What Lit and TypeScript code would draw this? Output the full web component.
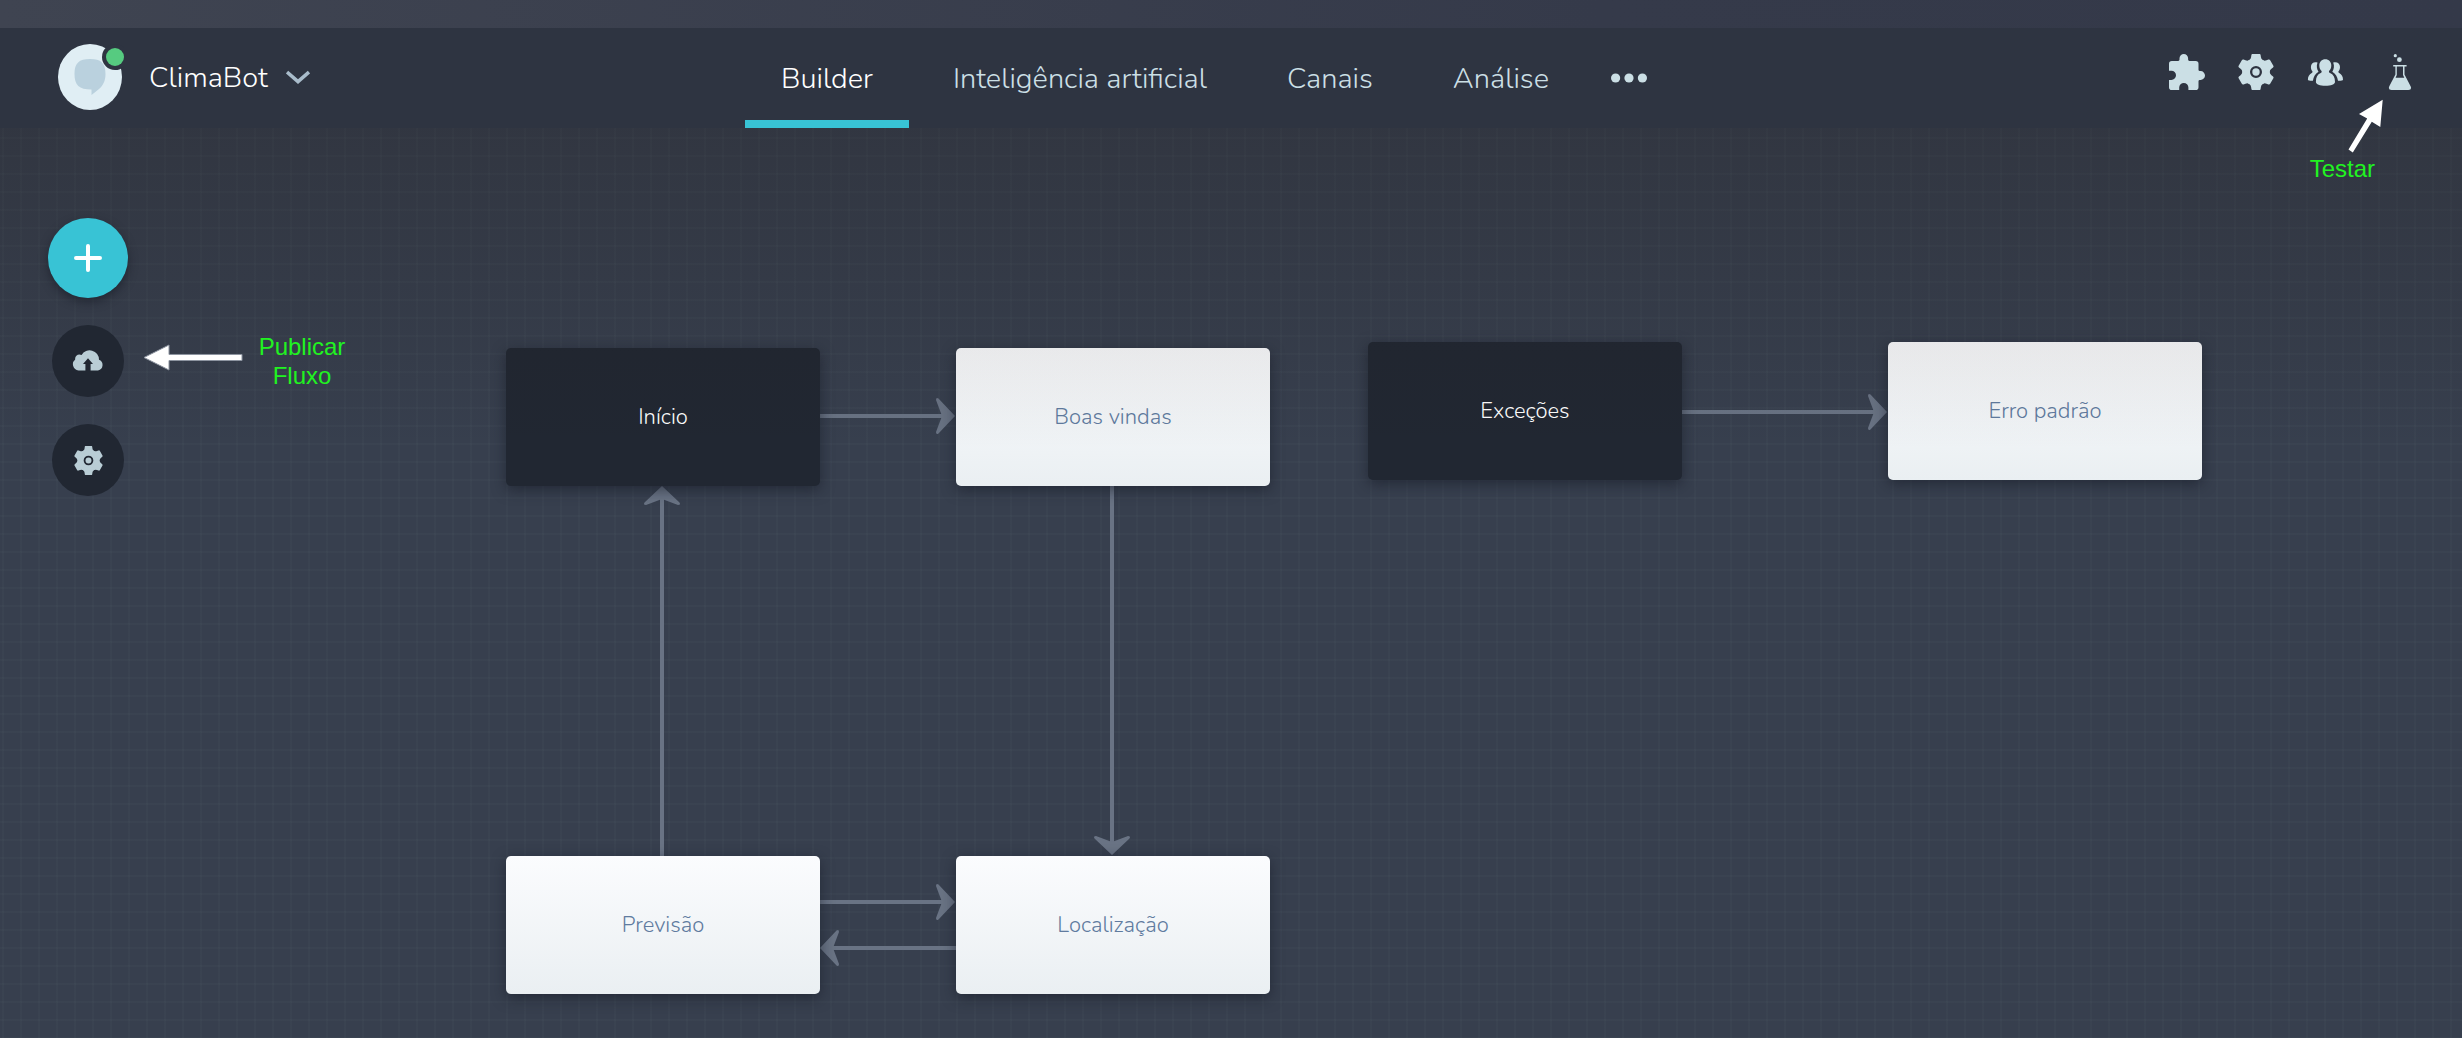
import { LitElement, html, svg, css } from "lit";
import { customElement, state } from "lit/decorators.js";
import { classMap } from "lit/directives/class-map.js";
import { styleMap } from "lit/directives/style-map.js";

interface FlowNode {
  label: string;
  x: number;
  y: number;
  dark?: boolean;
}

interface Link {
  x1: number;
  y1: number;
  x2: number;
  y2: number;
  angle: number;
}

const TABS = ["Builder", "Inteligência artificial", "Canais", "Análise"];

const NODES: FlowNode[] = [
  { label: "Início", x: 506, y: 220, dark: true },
  { label: "Boas vindas", x: 956, y: 220 },
  { label: "Exceções", x: 1368, y: 214, dark: true },
  { label: "Erro padrão", x: 1888, y: 214 },
  { label: "Previsão", x: 506, y: 728 },
  { label: "Localização", x: 956, y: 728 },
];

/* Each link runs from (x1, y1) to its arrow tip at (x2, y2). */
const LINKS: Link[] = [
  { x1: 820, y1: 288, x2: 955, y2: 288, angle: 0 },
  { x1: 1682, y1: 284, x2: 1887, y2: 284, angle: 0 },
  { x1: 1112, y1: 358, x2: 1112, y2: 727, angle: 90 },
  { x1: 662, y1: 728, x2: 662, y2: 358, angle: -90 },
  { x1: 820, y1: 774, x2: 955, y2: 774, angle: 0 },
  { x1: 956, y1: 820, x2: 820, y2: 820, angle: 180 },
];

const gear = (size: number) => html`
  <svg width=${size} height=${size} viewBox="-18 -18 36 36" aria-hidden="true" fill="currentColor">
    <path fill-rule="evenodd" d="M0-13.8A13.8 13.8 0 0 1 0 13.8A13.8 13.8 0 0 1 0-13.8ZM0-6A6 6 0 0 0 0 6A6 6 0 0 0 0-6Z" />
    ${[0, 60, 120, 180, 240, 300].map(
      (a) => svg`<path transform="rotate(${a})" d="M-6.6-12Q-5.2-13-4.9-15L-4.6-17Q-4.4-18.200-3.2-18.200H3.2Q4.4-18.200 4.6-17L4.9-15Q5.2-13 6.6-12L5-9H-5Z" />`
    )}
    <circle r="3.7" />
  </svg>
`;

const puzzle = html`
  <svg width="36" height="36" viewBox="0 0 36 36" aria-hidden="true" fill="currentColor">
    <path d="M2.8 7H9.2Q10.5 7 10.5 5.6V4.3A4.3 4.3 0 0 1 19.1 4.3V5.6Q19.1 7 20.4 7H26.7A2.8 2.8 0 0 1 29.5 9.8V15.8Q29.5 17.1 30.8 17.1H31.6A4.4 4.4 0 0 1 31.6 25.9H30.8Q29.5 25.9 29.5 27.2V33.2A2.8 2.8 0 0 1 26.7 36H19.4V33.6A4.6 4.6 0 0 0 10.2 33.6V36H2.8A2.8 2.8 0 0 1 0 33.2V25.9H2.4A4.6 4.6 0 0 0 2.4 16.7H0V9.8A2.8 2.8 0 0 1 2.8 7Z" />
  </svg>
`;

const people = html`
  <svg width="36" height="36" viewBox="0 0 36 36" aria-hidden="true" fill="currentColor">
    <path d="M18.3 5.3C21.8 5.3 24.3 8 24.3 11.4C24.3 13.9 23.4 15.8 22 17C21.8 18 22.2 18.6 23 19C26.4 20.3 28 23.4 28 28C28 30.4 24 31.7 18.4 31.7C12.8 31.7 8.9 30.4 8.9 28C8.9 23.4 10.4 20.3 13.7 19C14.5 18.6 14.8 18 14.6 17C13.2 15.8 12.3 13.9 12.3 11.4C12.3 8 14.8 5.3 18.3 5.3Z" />
    <path d="M26.2 8.6C29.8 7.4 33 9.4 33 13C33 14.9 32.4 16.2 31.5 17.2C31.3 18 31.5 18.5 32.2 18.9C34.7 20.2 36 22.4 36 25.7C36 26.5 33.4 27 31 26.8C30.4 22.9 28.7 19.6 25.3 17.7C26.9 15.5 27.6 12.2 26.2 8.6Z" />
    <path d="M10.5 8.6C6.9 7.4 3.9 9.4 3.9 13C3.9 14.9 4.5 16.2 5.4 17.2C5.6 18 5.4 18.5 4.7 18.9C2.2 20.2 0.9 22.4 0.9 25.7C0.9 26.5 3.5 27 5.9 26.8C6.5 22.9 8.2 19.6 11.5 17.7C9.9 15.5 9.2 12.2 10.5 8.6Z" />
  </svg>
`;

const flask = html`
  <svg width="24" height="36" viewBox="0 0 24 36" aria-hidden="true" fill="currentColor">
    <circle cx="7.3" cy="1.7" r="1.6" />
    <circle cx="11.4" cy="5.7" r="2.4" />
    <path fill-rule="evenodd" d="M5.2 11H18.6V12.6H16.5V20.5L22.6 32.2Q24.2 36 20.4 36H3.5Q-0.2 36 1.3 32.2L7.4 20.5V12.6H5.2ZM8.8 12.6V21L7.6 23.7H16.3L15 21V12.6Z" />
  </svg>
`;

const cloud = html`
  <svg width="32" height="22" viewBox="0 0 32 22" aria-hidden="true" fill="currentColor">
    <path d="M6.5 20.5A6.3 6.3 0 0 1 3.2 9.4C2.6 6 6.3 3.3 9.6 5.1A9.3 9.3 0 0 1 27 9.8A5.6 5.6 0 0 1 26 20.5H18.6V14H21L16 8.2L11 14H13.4V20.5Z" />
  </svg>
`;

@customElement("app-root")
export class AppRoot extends LitElement {
  static styles = css`
    :host {
      display: flex;
      flex-direction: column;
      min-height: 100vh;
      background: #373f4e;
      color: #fff;
      font-family: Nunito, "Open Sans", sans-serif;
      font-weight: 340;
      position: relative;
      overflow: hidden;
    }
    button {
      margin: 0;
      padding: 0;
      border: 0;
      background: none;
      color: inherit;
      font: inherit;
      cursor: pointer;
    }
    svg {
      display: block;
    }
    .strip {
      height: 28px;
      background: linear-gradient(90deg, #3f4451, #353a4a 65%, #343949);
    }
    .header {
      display: grid;
      grid-template-columns: 1fr auto 1fr;
      height: 100px;
      background: #2e3441;
    }
    .brand {
      display: flex;
      align-items: center;
      gap: 25px;
      padding: 0 0 2px 58px;
    }
    .bot {
      display: flex;
      align-items: center;
      gap: 18px;
      font-size: 29px;
    }
    .tabs {
      display: flex;
      gap: 8px;
    }
    .tab {
      display: flex;
      align-items: center;
      padding: 8px 36px 0;
      border-bottom: 8px solid transparent;
      color: #cbdfe5;
      font-size: 29px;
      text-decoration: none;
    }
    .tab.active {
      color: #fff;
      border-color: #38c3d5;
    }
    .more {
      width: 124px;
      padding-left: 18px;
      color: #cbdfe5;
    }
    .tools {
      display: flex;
      align-items: center;
      justify-content: flex-end;
      gap: 33px;
      padding: 0 38px 12px 0;
      color: #cbdfe5;
    }
    .tool-wide {
      display: flex;
      justify-content: center;
      width: 48px;
    }
    .canvas {
      flex: 1;
      position: relative;
      min-height: 910px;
      background:
        repeating-linear-gradient(90deg, transparent 0 2px, rgba(150, 180, 170, 0.03) 2px 4px, transparent 4px 18px),
        repeating-linear-gradient(180deg, transparent 0 9px, rgba(150, 180, 170, 0.03) 9px 11px, transparent 11px 18px);
    }
    .links {
      position: absolute;
      inset: 0;
      width: 100%;
      height: 100%;
      overflow: visible;
    }
    .node {
      position: absolute;
      width: 314px;
      height: 138px;
      border-radius: 5px;
      background: linear-gradient(#fbfcfe, #eaeff2);
      color: #607b9f;
      font-size: 22px;
      box-shadow: 0 4px 14px rgba(24, 28, 40, 0.6);
    }
    .node.dark {
      background: #212732;
      color: #fff;
    }
    .shade {
      position: absolute;
      inset: 0 0 auto;
      height: 320px;
      background: linear-gradient(rgba(32, 26, 24, 0.24), rgba(32, 26, 24, 0.09) 66%, transparent);
      pointer-events: none;
    }
    .actions {
      position: relative;
      display: inline-flex;
      flex-direction: column;
      align-items: center;
      gap: 27px;
      padding: 90px 0 0 48px;
    }
    .round {
      display: grid;
      place-items: center;
      width: 72px;
      height: 72px;
      border-radius: 50%;
      background: #212732;
      color: #b9cdd5;
    }
    .round.add {
      width: 80px;
      height: 80px;
      background: #38c3d5;
      color: #fff;
      box-shadow: 0 4px 10px rgba(20, 24, 34, 0.55);
    }
    .note {
      position: absolute;
      margin: 0;
      color: #21f321;
      font: 400 24px/29px "Liberation Sans", sans-serif;
      text-align: center;
    }
    .publish {
      left: 257px;
      top: 332px;
      width: 90px;
    }
    .test {
      right: 87px;
      top: 154px;
    }
    .pointer {
      position: absolute;
      pointer-events: none;
    }
    .publish-pointer {
      left: 140px;
      top: 342px;
    }
    .test-pointer {
      right: 72px;
      top: 96px;
    }
  `;

  @state() private active = TABS[0];

  private choose(e: Event, tab: string) {
    e.preventDefault();
    this.active = tab;
  }

  render() {
    return html`
      <div class="strip"></div>
      <header class="header">
        <div class="brand">
          <svg width="66" height="66" viewBox="0 0 66 66" role="img" aria-label="Bot online">
            <ellipse cx="32" cy="33" rx="32" ry="33" fill="#e0eef4" />
            <path fill="#bad1de" d="M32 15C43 15 47.5 19 47.5 30C47.5 37 45 41.5 41 45L33.5 51V45.5C21 45.5 16.5 41 16.5 30C16.5 19 21 15 32 15Z" />
            <circle cx="57" cy="13" r="13" fill="#2e3441" />
            <circle cx="57" cy="13" r="9" fill="#56cb80" />
          </svg>
          <button class="bot">
            ClimaBot
            <svg width="24" height="14" viewBox="0 0 24 14" aria-hidden="true">
              <path d="M1 2L12 11.5L23 2" fill="none" stroke="#a9bccb" stroke-width="3.6" />
            </svg>
          </button>
        </div>
        <nav class="tabs" aria-label="Principal">
          ${TABS.map(
            (t) => html`<a
              href="#"
              class=${classMap({ tab: true, active: t === this.active })}
              @click=${(e: Event) => this.choose(e, t)}
              >${t}</a
            >`
          )}
          <button class="more" aria-label="Mais">
            <svg width="36" height="10" viewBox="0 0 36 10" aria-hidden="true" fill="currentColor">
              <circle cx="4.6" cy="5" r="4.6" />
              <circle cx="18" cy="5" r="4.6" />
              <circle cx="31.4" cy="5" r="4.6" />
            </svg>
          </button>
        </nav>
        <div class="tools">
          <button aria-label="Extensões">${puzzle}</button>
          <button aria-label="Configurações">${gear(36)}</button>
          <button aria-label="Equipe">${people}</button>
          <button class="tool-wide" aria-label="Testar">${flask}</button>
        </div>
      </header>

      <main class="canvas">
        <svg class="links" aria-hidden="true">
          ${LINKS.map((l) => {
            const r = (l.angle * Math.PI) / 180;
            return svg`
              <line x1=${l.x1} y1=${l.y1} x2=${l.x2 - 13 * Math.cos(r)} y2=${l.y2 - 13 * Math.sin(r)} stroke="#697384" stroke-width="4" />
              <path transform="translate(${l.x2} ${l.y2}) rotate(${l.angle})" d="M0 0L-16.5-17.5Q-19-19-19-16L-13 0L-19 16Q-19 19-16.5 17.5Z" fill="#697384" />`;
          })}
        </svg>
        ${NODES.map(
          (n) => html`<button
            class=${classMap({ node: true, dark: !!n.dark })}
            style=${styleMap({ left: `${n.x}px`, top: `${n.y}px` })}
          >
            ${n.label}
          </button>`
        )}
        <div class="shade"></div>
        <div class="actions">
          <button class="round add" aria-label="Adicionar">
            <svg width="28" height="28" viewBox="0 0 28 28" aria-hidden="true">
              <path d="M14 2V26M2 14H26" fill="none" stroke="currentColor" stroke-width="4" stroke-linecap="round" />
            </svg>
          </button>
          <button class="round" aria-label="Publicar">${cloud}</button>
          <button class="round" aria-label="Configurar fluxo">${gear(29)}</button>
        </div>
      </main>

      <svg class="pointer publish-pointer" width="104" height="30" viewBox="0 0 104 30" aria-hidden="true">
        <path d="M4 15.5L29 3V12.5H102V18.5H29V28Z" fill="#fff" stroke="#8d94a0" stroke-width="1" />
      </svg>
      <p class="note publish">Publicar Fluxo</p>
      <svg class="pointer test-pointer" width="44" height="60" viewBox="0 0 44 60" aria-hidden="true">
        <path d="M36.7 3.7L13 18L21.2 22.6L2.5 53.5L6.8 56.6L25.8 25.8L34.3 31Z" fill="#fff" />
      </svg>
      <p class="note test">Testar</p>
    `;
  }
}
